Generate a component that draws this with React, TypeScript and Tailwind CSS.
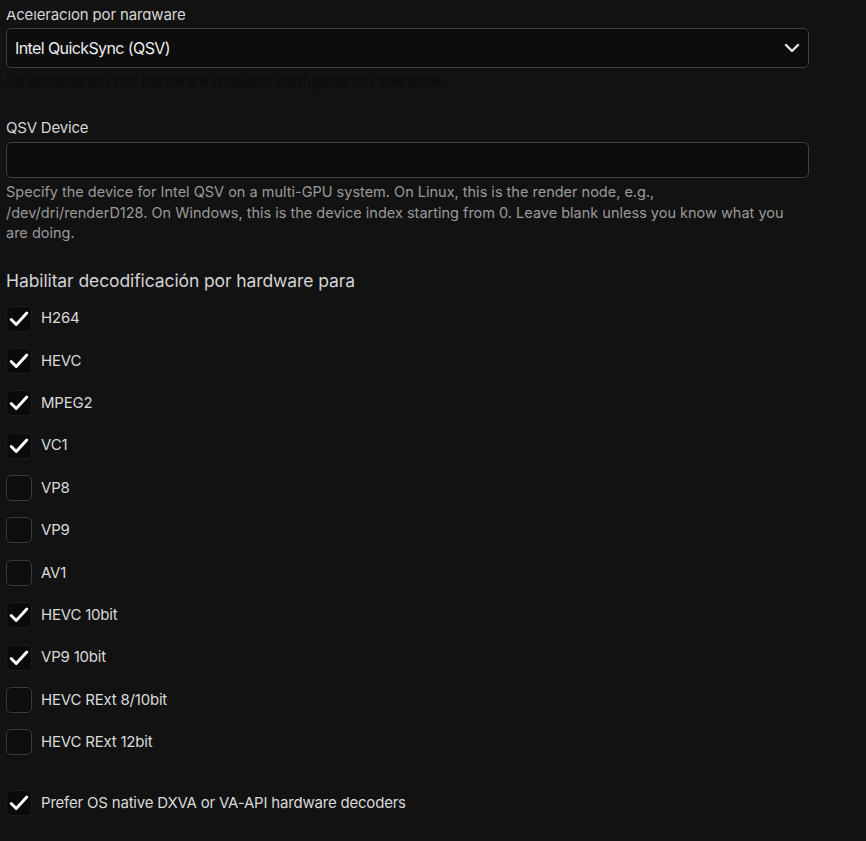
import React from 'react';

const codecs: [string, boolean][] = [
  ['H264', true],
  ['HEVC', true],
  ['MPEG2', true],
  ['VC1', true],
  ['VP8', false],
  ['VP9', false],
  ['AV1', false],
  ['HEVC 10bit', true],
  ['VP9 10bit', true],
  ['HEVC RExt 8/10bit', false],
  ['HEVC RExt 12bit', false],
];

function CheckRow({ label, checked }: { label: string; checked: boolean }) {
  return (
    <label className="flex h-[26px] items-center gap-[9px]">
      <span
        className={
          checked
            ? 'flex h-[26px] w-[26px] items-center justify-center rounded-[5px] border border-[#1b1b1b] bg-[#0a0a0a]'
            : 'flex h-[26px] w-[26px] items-center justify-center rounded-[5px] border border-[#3a3a3a] bg-[#0e0e0e]'
        }
      >
        {checked && (
          <svg width="22" height="22" viewBox="0 0 24 24" fill="none" stroke="#ffffff" strokeWidth="3.2" strokeLinecap="round" strokeLinejoin="round">
            <path d="M3.5 12.5l5.5 5.5L20.5 5.5" />
          </svg>
        )}
      </span>
      <span className="text-[15px] tracking-[-0.2px] text-[#dadada]">{label}</span>
    </label>
  );
}

export default function App() {
  return (
    <div className="min-h-screen bg-[#121212] pl-[6px] pt-[11px] font-['Inter',sans-serif]">
      <div className="w-[803px]">
        {/* label clipped by header above */}
        <div className="h-[11px] overflow-hidden">
          <div className="-mt-[6px] text-[15px] leading-[20px] tracking-[-0.15px] text-[#d6d6d6]">Aceleración por hardware</div>
        </div>
        <div className="mt-[6px] flex h-[40px] items-center justify-between rounded-[5px] border border-[#3f3f3f] bg-[#0d0d0d] pl-[8px] pr-[8px]">
          <span className="text-[16px] tracking-[-0.6px] text-[#ececec]">Intel QuickSync (QSV)</span>
          <svg width="16" height="16" viewBox="0 0 16 16" fill="none" stroke="#e8e8e8" strokeWidth="2.4" strokeLinecap="round" strokeLinejoin="round">
            <path d="M2 5l6 6 6-6" />
          </svg>
        </div>
        <p className="mt-[3px] text-[15px] leading-[20px] text-[#0a0a0a]">
          La aceleración por hardware requiere configuración adicional.
        </p>

        <div className="mt-[27px] text-[15px] leading-[20px] tracking-[-0.2px] text-[#d6d6d6]">QSV Device</div>
        <div className="mt-[4px] h-[36px] rounded-[5px] border border-[#3f3f3f] bg-[#0d0d0d]" />
        <p className="mt-[4px] text-[14.5px] leading-[20.5px] text-[#9a9a9a]">
          Specify the device for Intel QSV on a multi-GPU system. On Linux, this is the render node, e.g.,
          <br />
          /dev/dri/renderD128. On Windows, this is the device index starting from 0. Leave blank unless you know what you
          <br />
          are doing.
        </p>

        <h3 className="mt-[25px] text-[17.5px] leading-[24px] tracking-[-0.1px] text-[#d4d4d4]">Habilitar decodificación por hardware para</h3>
        <div className="mt-[13px] flex flex-col gap-[16.4px]">
          {codecs.map(([name, on]) => (
            <CheckRow key={name} label={name} checked={on} />
          ))}
        </div>
        <div className="mt-[35px]">
          <CheckRow label="Prefer OS native DXVA or VA-API hardware decoders" checked />
        </div>
      </div>
    </div>
  );
}
